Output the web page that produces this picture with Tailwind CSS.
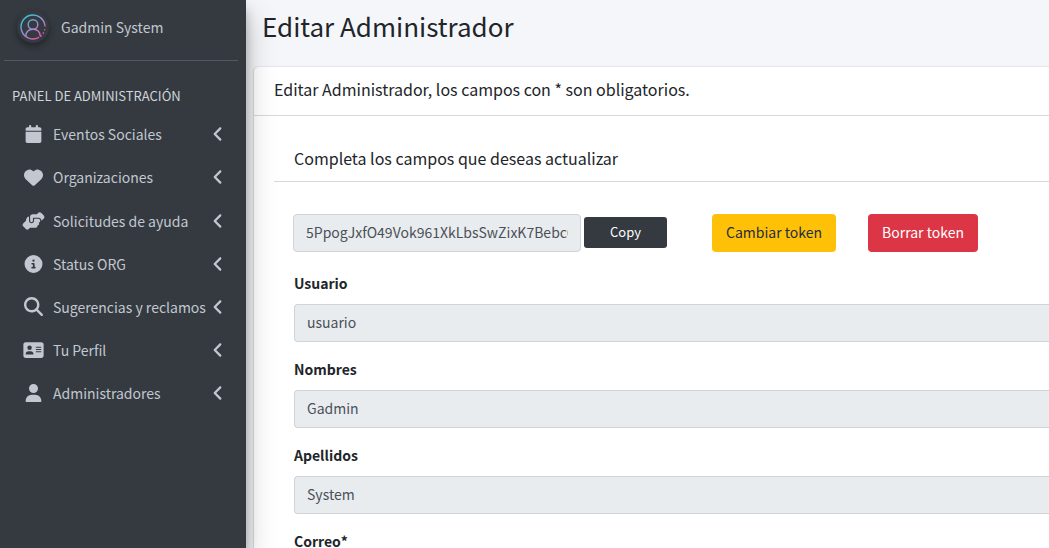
<!DOCTYPE html>
<html lang="es">
<head>
<meta charset="utf-8">
<meta name="viewport" content="width=device-width, initial-scale=1">
<title>Editar Administrador</title>
<script src="https://cdn.jsdelivr.net/npm/@tailwindcss/browser@4"></script>
</head>
<body class="flex h-screen overflow-hidden bg-[#f4f6f9] font-['Source_Sans_Pro','Noto_Sans_CJK_SC',sans-serif] text-[14px] leading-6 text-[#212529]">

<aside class="relative z-10 w-[246px] shrink-0 bg-[#343a40] text-[#c2c7d0] shadow-[0_14px_28px_rgba(0,0,0,0.25),0_10px_10px_rgba(0,0,0,0.22)]">
  <div class="mx-1 mr-2 flex h-[61px] items-start gap-3 border-b border-[#4f5962] pt-[11px] pl-[13px]">
    <span class="flex size-8 items-center justify-center rounded-full shadow-[0_3px_6px_rgba(0,0,0,0.16),0_3px_6px_rgba(0,0,0,0.23)]">
      <svg class="size-[26px]" viewBox="0 0 26 26" fill="none" stroke="url(#avatar)" stroke-width="1.4" stroke-linecap="round" aria-hidden="true">
        <defs><linearGradient id="avatar" x1="4" y1="3" x2="20" y2="24" gradientUnits="userSpaceOnUse"><stop stop-color="#35c3dc"/><stop offset=".5" stop-color="#9a8fd0"/><stop offset="1" stop-color="#f04fae"/></linearGradient></defs>
        <path d="M25 12A12 12 0 1 0 18.500 23.700M20.800 22.100l.4-.4M23.200 19.300l.2-.4M24.700 15.800v-.2"/>
        <circle cx="13" cy="10.500" r="4.800"/>
        <path d="M5.800 22.200c.2-4.400 3.200-6.900 7.200-6.900s7 2.500 7.200 6.900"/>
      </svg>
    </span>
    <a href="#" class="pt-1">Gadmin System</a>
  </div>
  <nav aria-label="Panel de administración">
    <h2 class="px-3 pt-[25px] pb-[7px] text-[13px] leading-5 text-[#d0d4db]">PANEL DE ADMINISTRACIÓN</h2>
    <ul class="fill-current">
      <li><a href="#" class="flex h-[43px] items-center pr-6 pb-px pl-[21px]"><svg class="mr-[7px] h-[18px] w-[25px] shrink-0" viewBox="0 0 448 512"><path d="M96 32V64H48C21.500 64 0 85.500 0 112v48H448V112c0-26.500-21.500-48-48-48H352V32c0-17.700-14.300-32-32-32s-32 14.300-32 32V64H160V32c0-17.700-14.300-32-32-32S96 14.300 96 32zM448 192H0V464c0 26.500 21.500 48 48 48H400c26.500 0 48-21.500 48-48V192z"/></svg><span class="flex-1 whitespace-nowrap">Eventos Sociales</span><svg class="h-[18px] w-[9px] shrink-0" viewBox="32 0 224 512"><path d="M41.400 233.400c-12.500 12.500-12.500 32.800 0 45.300l160 160c12.500 12.500 32.800 12.500 45.300 0s12.500-32.800 0-45.300L109.300 256 246.600 118.600c12.500-12.500 12.500-32.800 0-45.300s-32.800-12.500-45.300 0l-160 160z"/></svg></a></li>
      <li><a href="#" class="flex h-[43px] items-center pr-6 pb-px pl-[21px]"><svg class="mr-[7px] h-[19px] w-[25px] shrink-0" viewBox="0 0 512 512"><path d="M47.600 300.400L228.300 469.100c7.500 7 17.400 10.900 27.700 10.900s20.200-3.900 27.700-10.900L464.400 300.400c30.400-28.300 47.600-68 47.600-109.500v-5.800c0-69.900-50.500-129.500-119.400-141C347 36.500 300.600 51.400 268 84L256 96 244 84c-32.600-32.600-79-47.500-124.600-39.900C50.500 55.600 0 115.200 0 185.100v5.800c0 41.500 17.200 81.200 47.600 109.500z"/></svg><span class="flex-1 whitespace-nowrap">Organizaciones</span><svg class="h-[18px] w-[9px] shrink-0" viewBox="32 0 224 512"><path d="M41.400 233.400c-12.500 12.500-12.500 32.800 0 45.300l160 160c12.500 12.500 32.800 12.500 45.300 0s12.500-32.800 0-45.300L109.300 256 246.600 118.600c12.500-12.500 12.500-32.800 0-45.300s-32.800-12.500-45.300 0l-160 160z"/></svg></a></li>
      <li><a href="#" class="flex h-[43px] items-center pr-6 pl-[21px]"><svg class="mr-[7px] h-[18px] w-[25px] shrink-0" viewBox="0 0 640 512"><path d="M544 248v3.300l69.700-69.700c21.900-21.900 21.900-57.300 0-79.200L535.600 24.400c-21.900-21.900-57.300-21.900-79.200 0L416.300 64.500c-2.700-.3-5.500-.5-8.300-.5H296c-37.100 0-67.600 28-71.600 64H224V248c0 22.100 17.900 40 40 40s40-17.900 40-40V160h160c44.200 0 80 35.800 80 80v8zM336 192v56c0 39.800-32.200 72-72 72s-72-32.200-72-72V129.400c-35.900 6.200-65.800 32.300-76 68.200L99.500 255.200 26.300 328.400c-21.900 21.900-21.900 57.300 0 79.200l78.100 78.100c21.900 21.900 57.300 21.900 79.200 0l37.700-37.700c.9 0 1.800 .1 2.700 .1H384c26.500 0 48-21.500 48-48c0-5.600-1-11-2.700-16H432c26.500 0 48-21.500 48-48c0-12.800-5-24.400-13.200-33c25.700-5 45.100-27.600 45.200-54.800v-.4c-.1-30.800-25.100-55.800-56-55.800l-120 0z"/></svg><span class="flex-1 whitespace-nowrap">Solicitudes de ayuda</span><svg class="h-[18px] w-[9px] shrink-0" viewBox="32 0 224 512"><path d="M41.400 233.400c-12.500 12.500-12.500 32.800 0 45.300l160 160c12.500 12.500 32.800 12.500 45.300 0s12.500-32.800 0-45.300L109.300 256 246.600 118.600c12.500-12.500 12.500-32.800 0-45.300s-32.800-12.500-45.300 0l-160 160z"/></svg></a></li>
      <li><a href="#" class="flex h-[43px] items-center pr-6 pl-[21px]"><svg class="mr-[7px] h-[18px] w-[25px] shrink-0" viewBox="0 0 512 512"><path d="M256 512A256 256 0 1 0 256 0a256 256 0 1 0 0 512zM216 336h24V272H216c-13.300 0-24-10.700-24-24s10.700-24 24-24h48c13.300 0 24 10.700 24 24v88h8c13.300 0 24 10.700 24 24s-10.700 24-24 24H216c-13.300 0-24-10.700-24-24s10.700-24 24-24zm40-208a32 32 0 1 1 0 64 32 32 0 1 1 0-64z"/></svg><span class="flex-1 whitespace-nowrap">Status ORG</span><svg class="h-[18px] w-[9px] shrink-0" viewBox="32 0 224 512"><path d="M41.400 233.400c-12.500 12.500-12.500 32.800 0 45.300l160 160c12.500 12.500 32.800 12.500 45.300 0s12.500-32.800 0-45.300L109.300 256 246.600 118.600c12.500-12.500 12.500-32.800 0-45.300s-32.800-12.500-45.300 0l-160 160z"/></svg></a></li>
      <li><a href="#" class="flex h-[43px] items-center pr-6 pl-[21px]"><svg class="mr-[7px] h-[19px] w-[25px] shrink-0" viewBox="0 0 512 512"><path d="M416 208c0 45.900-14.900 88.300-40 122.700L502.600 457.400c12.500 12.500 12.500 32.800 0 45.300s-32.800 12.500-45.300 0L330.700 376c-34.400 25.200-76.800 40-122.700 40C93.100 416 0 322.900 0 208S93.100 0 208 0S416 93.100 416 208zM208 352a144 144 0 1 0 0-288 144 144 0 1 0 0 288z"/></svg><span class="flex-1 whitespace-nowrap">Sugerencias y reclamos</span><svg class="h-[18px] w-[9px] shrink-0" viewBox="32 0 224 512"><path d="M41.400 233.400c-12.500 12.500-12.500 32.800 0 45.300l160 160c12.500 12.500 32.800 12.500 45.300 0s12.500-32.800 0-45.300L109.300 256 246.600 118.600c12.500-12.500 12.500-32.800 0-45.300s-32.800-12.500-45.300 0l-160 160z"/></svg></a></li>
      <li><a href="#" class="flex h-[43px] items-center pr-6 pl-[21px]"><svg class="mr-[7px] h-[18px] w-[25px] shrink-0" viewBox="0 0 576 512"><path d="M64 32C28.700 32 0 60.700 0 96V416c0 35.300 28.700 64 64 64H512c35.300 0 64-28.700 64-64V96c0-35.300-28.700-64-64-64H64zm80 256h64c44.200 0 80 35.800 80 80c0 8.800-7.200 16-16 16H80c-8.800 0-16-7.200-16-16c0-44.200 35.800-80 80-80zm-32-96a64 64 0 1 1 128 0 64 64 0 1 1 -128 0zm256-32H496c8.800 0 16 7.200 16 16s-7.200 16-16 16H368c-8.800 0-16-7.200-16-16s7.200-16 16-16zm0 64H496c8.800 0 16 7.200 16 16s-7.200 16-16 16H368c-8.800 0-16-7.200-16-16s7.200-16 16-16zm0 64H496c8.800 0 16 7.200 16 16s-7.200 16-16 16H368c-8.800 0-16-7.200-16-16s7.200-16 16-16z"/></svg><span class="flex-1 whitespace-nowrap">Tu Perfil</span><svg class="h-[18px] w-[9px] shrink-0" viewBox="32 0 224 512"><path d="M41.400 233.400c-12.500 12.500-12.500 32.800 0 45.300l160 160c12.500 12.500 32.800 12.500 45.300 0s12.500-32.800 0-45.300L109.300 256 246.600 118.600c12.500-12.500 12.500-32.800 0-45.300s-32.800-12.500-45.300 0l-160 160z"/></svg></a></li>
      <li><a href="#" class="flex h-[43px] items-center pr-6 pl-[21px]"><svg class="mr-[7px] h-[18px] w-[25px] shrink-0" viewBox="0 0 448 512"><path d="M224 256A128 128 0 1 0 224 0a128 128 0 1 0 0 256zm-45.700 48C79.800 304 0 383.800 0 482.300C0 498.700 13.300 512 29.700 512H418.300c16.400 0 29.700-13.300 29.700-29.700C448 383.800 368.200 304 269.700 304H178.300z"/></svg><span class="flex-1 whitespace-nowrap">Administradores</span><svg class="h-[18px] w-[9px] shrink-0" viewBox="32 0 224 512"><path d="M41.400 233.400c-12.500 12.500-12.500 32.800 0 45.300l160 160c12.500 12.500 32.800 12.500 45.300 0s12.500-32.800 0-45.300L109.300 256 246.600 118.600c12.500-12.500 12.500-32.800 0-45.300s-32.800-12.500-45.300 0l-160 160z"/></svg></a></li>
    </ul>
  </nav>
</aside>

<main class="min-w-0 flex-1 pl-2">
  <h1 class="px-2 pt-2 pb-6 text-[26px] leading-[35px]">Editar Administrador</h1>
  <section class="rounded-tl bg-white shadow-[0_0_1px_rgba(0,0,0,0.3),0_1px_3px_rgba(0,0,0,0.2)]">
    <h2 class="border-b border-black/15 px-5 pt-[10px] pb-[14px] text-[16px]">Editar Administrador, los campos con * son obligatorios.</h2>
    <form class="pl-5">
      <h3 class="border-b border-black/15 px-5 pt-[30px] pb-[11px] text-[16px]">Completa los campos que deseas actualizar</h3>
      <div class="flex items-center pt-8 pl-[19px]">
        <input type="text" readonly aria-label="Token" value="5PpogJxfO49Vok961XkLbsSwZixK7Bebc0aT" class="h-[38px] w-72 rounded border border-[#ced4da] bg-[#e9ecef] px-3 pb-[2px] text-[#495057]">
        <button type="button" class="mb-px ml-[3px] h-[31px] w-[83px] rounded-[3px] bg-[#343a40] pb-px text-[13px] text-white">Copy</button>
        <button type="button" class="ml-[45px] h-[38px] w-[124px] rounded bg-[#ffc107] pb-[2px] text-[#1f2d3d]">Cambiar token</button>
        <button type="button" class="ml-8 h-[38px] w-[110px] rounded bg-[#dc3545] pb-[2px] text-white">Borrar token</button>
      </div>
      <div class="flex flex-col gap-[15px] pt-[19px] pl-5">
        <div class="flex flex-col gap-[9px]"><label for="usuario" class="font-bold">Usuario</label><input id="usuario" type="text" readonly value="usuario" class="h-[38px] w-full rounded-l border border-r-0 border-[#ced4da] bg-[#e9ecef] px-3 pb-[2px] text-[#495057]"></div>
        <div class="flex flex-col gap-[9px]"><label for="nombres" class="font-bold">Nombres</label><input id="nombres" type="text" readonly value="Gadmin" class="h-[38px] w-full rounded-l border border-r-0 border-[#ced4da] bg-[#e9ecef] px-3 pb-[2px] text-[#495057]"></div>
        <div class="flex flex-col gap-[9px]"><label for="apellidos" class="font-bold">Apellidos</label><input id="apellidos" type="text" readonly value="System" class="h-[38px] w-full rounded-l border border-r-0 border-[#ced4da] bg-[#e9ecef] px-3 pb-[2px] text-[#495057]"></div>
        <div class="flex flex-col gap-[9px]"><label for="correo" class="font-bold">Correo*</label><input id="correo" type="email" class="h-[38px] w-full rounded-l border border-r-0 border-[#ced4da] bg-white px-3 pb-[2px] text-[#495057]"></div>
      </div>
    </form>
  </section>
</main>
</body>
</html>
